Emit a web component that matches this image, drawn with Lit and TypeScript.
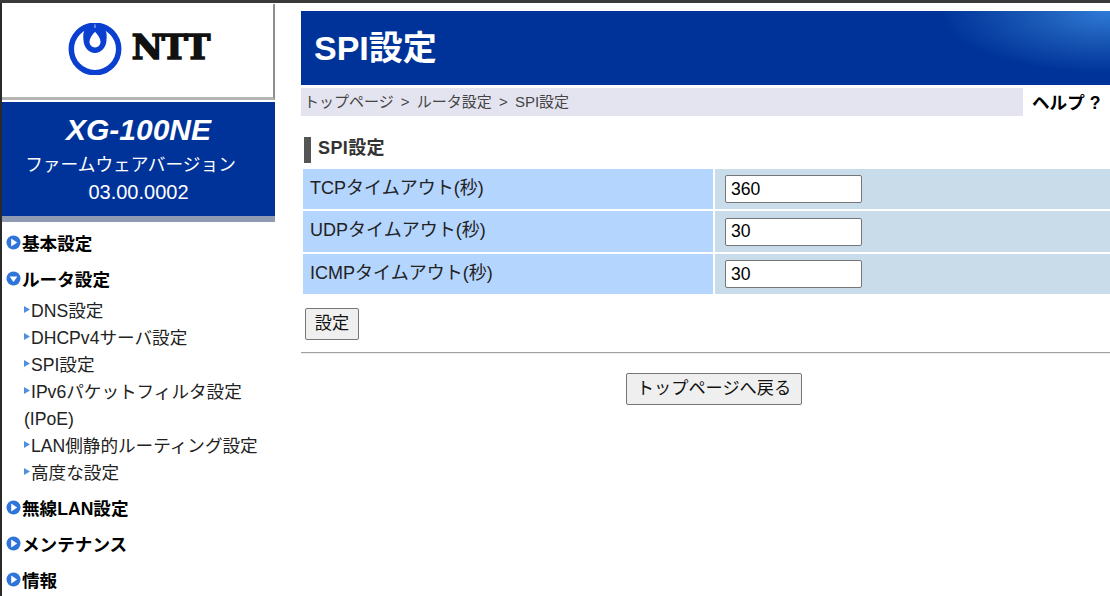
import { LitElement, html, css, svg } from "lit";
import { customElement } from "lit/decorators.js";

const arrow = (down = false) => html`<svg class="bullet" width="15" height="15" viewBox="0 0 15 15">
  <circle cx="7.5" cy="7.5" r="7" fill="#2f74d8"></circle>
  ${down
    ? svg`<path d="M3.6 5.4h7.8L7.5 11z" fill="#fff"></path>`
    : svg`<path d="M5.2 3.4v8.2l6-4.1z" fill="#fff"></path>`}
</svg>`;

const sub = html`<svg class="tri" width="6" height="7" viewBox="0 0 6 7"><path d="M0 0l6 3.5-6 3.500z" fill="#4f8fe0"></path></svg>`;

@customElement("app-root")
export class AppRoot extends LitElement {
  static styles = css`
    :host {
      display: block;
      width: 1110px;
      height: 596px;
      overflow: hidden;
      background: #fff;
      color: #111;
      font-family: "Liberation Sans", "Noto Sans CJK JP", sans-serif;
      font-size: 16px;
    }
    .topline { height: 3px; background: #3a3a3a; }
    .page { display: flex; height: 593px; }
    .side { width: 273px; flex: none; border-left: 2px solid #2a2a2a; }
    .logo {
      height: 93px;
      margin-top: 1px;
      box-sizing: content-box;
      background: #fff;
      border-right: 2px solid #8f8f8f;
      border-bottom: 3px solid #b4b4b4;
      display: flex;
      align-items: center;
      justify-content: center;
      gap: 10px;
      padding-bottom: 0;
    }
    .mark { margin: 0 0 4px 2px; }
    .ntt {
      font-family: "DejaVu Serif", serif;
      font-weight: 700;
      font-size: 34px;
      line-height: 1;
      color: #111;
      -webkit-text-stroke: 1.6px #111;
      letter-spacing: -1px;
      margin-bottom: 7px;
    }
    .model {
      margin-top: 2px;
      background: #003399;
      color: #fff;
      height: 114px;
      border-bottom: 6px solid #8f9bb3;
      text-align: center;
    }
    .model h2 {
      margin: 0;
      padding-top: 11px;
      font-size: 30px;
      line-height: 34px;
      font-style: italic;
      font-weight: 700;
    }
    .model p { margin: 0; line-height: 28px; }
    .model p.first { margin-top: 4px; padding-right: 16px; font-size: 17.7px; }
    .model p.ver { margin-top: -1px; font-size: 20px; }
    nav { padding-top: 10px; }
    .head {
      display: flex;
      align-items: center;
      gap: 1px;
      padding-left: 4px;
      height: 20px;
      font-weight: 700;
      font-size: 17.6px;
      color: #000;
      margin-bottom: 16px;
    }
    .head.open { margin-bottom: 10px; }
    .bullet { flex: none; }
    ul { list-style: none; margin: 0 0 10px; padding: 0 10px 0 22px; font-size: 17.6px; color: #222; }
    li { line-height: 27px; }
    .tri { margin: 0 1px 4px 0; }
    main { flex: 1; min-width: 0; margin-left: 26px; padding-top: 8px; }
    .title {
      height: 74px;
      display: flex;
      align-items: center;
      padding-left: 13px;
      color: #fff;
      background:
        radial-gradient(170px 62px at 100% 0, #2f7bd8 0%, #1c5cb8 42%, rgba(0, 51, 153, 0) 100%),
        #003399;
    }
    .title h1 { margin: 0 0 1px; font-size: 34px; font-weight: 700; line-height: 40px; }
    .crumbrow { display: flex; height: 28px; margin-top: 3px; }
    .crumb {
      width: 722px;
      background: #e4e4f0;
      color: #444;
      font-size: 15px;
      word-spacing: 3px;
      line-height: 27px;
      padding-left: 3px;
      box-sizing: border-box;
    }
    .help { margin-left: 9px; font-weight: 700; font-size: 17.6px; line-height: 30px; color: #000; white-space: nowrap; }
    .section {
      margin: 21px 0 6px 3px;
      border-left: 7px solid #555;
      height: 26px;
      padding-left: 7px;
      line-height: 22px;
      font-size: 18px;
      letter-spacing: 0.4px;
      font-weight: 700;
      color: #333;
    }
    .grid {
      margin-left: 2px;
      display: grid;
      grid-template-columns: 410px 1fr;
      grid-template-rows: 40px 41px 40px;
      gap: 2px;
    }
    .label { background: #b4d5fe; padding-left: 7px; line-height: 38px; font-size: 18px; color: #222; }
    .value { background: #c9dcea; display: flex; align-items: center; padding-left: 10px; }
    input {
      width: 137px;
      height: 28px;
      box-sizing: border-box;
      border: 1px solid #767676;
      border-radius: 2px;
      padding: 1px 5px;
      font: 17.6px "Liberation Sans", "Noto Sans CJK JP", sans-serif;
      color: #000;
      background: #fff;
      margin: 0;
    }
    button {
      display: block;
      height: 32px;
      box-sizing: border-box;
      border: 1px solid #767676;
      border-radius: 2px;
      background: #efefef;
      color: #111;
      font: 17.2px/1 "Liberation Sans", "Noto Sans CJK JP", sans-serif;
      padding: 0;
      margin: 0;
    }
    .set { width: 54px; margin: 14px 0 0 4px; }
    hr { margin: 12px 0 0; border: 0; border-top: 1px solid #a0a0a0; border-bottom: 1px solid #eee; height: 0; }
    .back { display: flex; justify-content: center; margin-top: 19px; padding-left: 17px; }
    .back button { width: 176px; }
  `;

  render() {
    const rows = [
      ["TCPタイムアウト(秒)", "360"],
      ["UDPタイムアウト(秒)", "30"],
      ["ICMPタイムアウト(秒)", "30"],
    ];
    return html`
      <div class="topline"></div>
      <div class="page">
        <aside class="side">
          <div class="logo">
            <svg class="mark" width="54" height="52" viewBox="0 0 54 52">
              <circle cx="27" cy="26" r="23.700" fill="none" stroke="#0a3fd0" stroke-width="5.500"></circle>
              <path d="M19 4C14 9 15.500 14 15.500 17 15.500 24 21 30 27 30S38.500 24 38.500 17C38.500 14 40 9 35 4Z" fill="#0a3fd0"></path>
              <path d="M27 8.700C30 12 32.500 15.500 32.500 18.800 32.500 22 30 24.400 27 24.400S21.500 22 21.500 18.800C21.500 15.500 24 12 27 8.700Z" fill="#fff"></path>
              <path d="M27 1.500v3.500" stroke="#7f9fe8" stroke-width="1.500"></path>
            </svg>
            <span class="ntt">NTT</span>
          </div>
          <div class="model">
            <h2>XG-100NE</h2>
            <p class="first">ファームウェアバージョン</p>
            <p class="ver">03.00.0002</p>
          </div>
          <nav>
            <div class="head">${arrow()}基本設定</div>
            <div class="head open">${arrow(true)}ルータ設定</div>
            <ul>
              <li>${sub}DNS設定</li>
              <li>${sub}DHCPv4サーバ設定</li>
              <li>${sub}SPI設定</li>
              <li>${sub}IPv6パケットフィルタ設定(IPoE)</li>
              <li>${sub}LAN側静的ルーティング設定</li>
              <li>${sub}高度な設定</li>
            </ul>
            <div class="head">${arrow()}無線LAN設定</div>
            <div class="head">${arrow()}メンテナンス</div>
            <div class="head">${arrow()}情報</div>
          </nav>
        </aside>
        <main>
          <div class="title"><h1>SPI設定</h1></div>
          <div class="crumbrow">
            <div class="crumb">トップページ &gt; ルータ設定 &gt; SPI設定</div>
            <div class="help">ヘルプ ?</div>
          </div>
          <div class="section">SPI設定</div>
          <div class="grid">
            ${rows.map(
              ([l, v]) => html`<div class="label">${l}</div><div class="value"><input type="text" .value=${v} /></div>`
            )}
          </div>
          <button class="set">設定</button>
          <hr />
          <div class="back"><button>トップページへ戻る</button></div>
        </main>
      </div>
    `;
  }
}
